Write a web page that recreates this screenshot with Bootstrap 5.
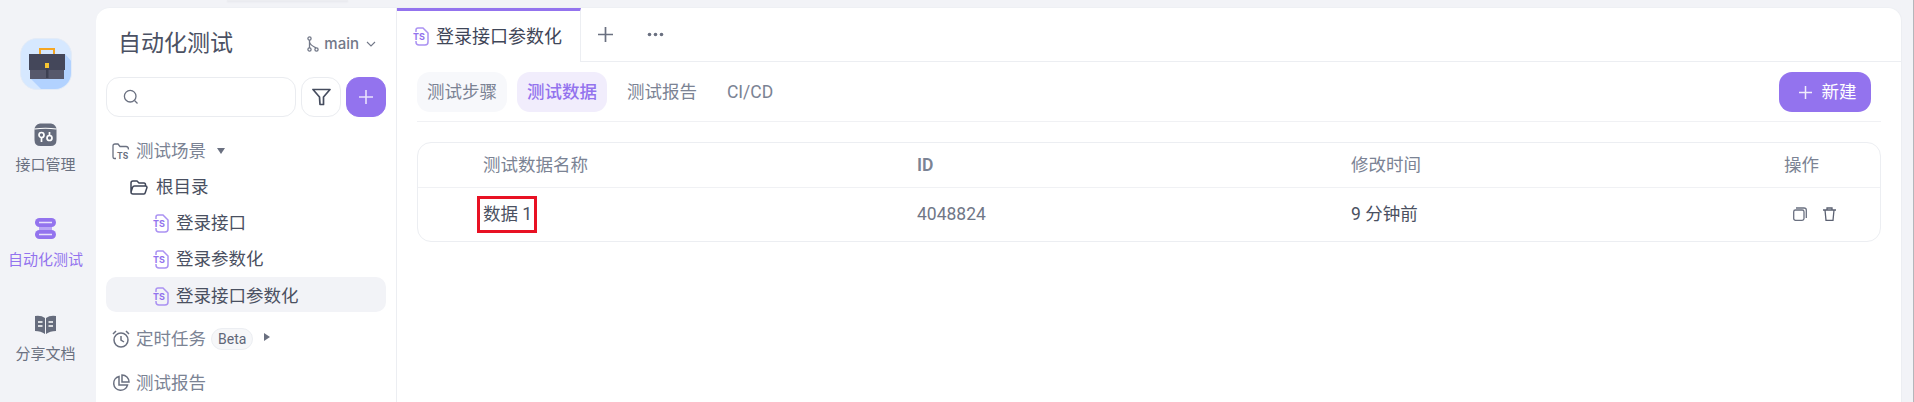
<!DOCTYPE html>
<html lang="zh">
<head>
    <title>自动化测试</title>
    <meta charset="UTF-8">
    <meta name="viewport" content="width=device-width, initial-scale=1.0">
    <link href="https://cdn.jsdelivr.net/npm/bootstrap@5.3.3/dist/css/bootstrap.min.css" rel="stylesheet">
    <style>
        html, body { height: 402px; overflow: hidden; }
        body { background: #f2f3f7; font-family: Roboto, "Noto Sans CJK SC", sans-serif; font-size: 17.5px; color: #5f6678; }
        .app-shell { height: 402px; padding-top: 7px; padding-right: 11px; border-right: 1px solid #b4b6bb; }
        .top-ghost { position: fixed; top: 0; left: 227px; width: 121px; height: 1px; background: #eceDf1; box-shadow: 0 1px 2px rgba(40,45,70,.08); }
        .side-rail { width: 96px; flex: none; margin-top: -7px; padding-right: 5px; }
        .rail-logo { width: 52px; height: 52px; flex: none; margin-top: 38px; margin-bottom: 33px; border-radius: 17px; background: #d6e8ff; border: 1px solid #e3ebf7; overflow: hidden; }
        .rail-item { height: 94.5px; flex: none; font-size: 15px; color: #6a7080; line-height: 20px; }
        .rail-ic { height: 24px; margin-bottom: 8px; }
        .rail-on { color: #9373ee; }
        .work-panel { background: #fff; border-radius: 14px 14px 0 0; min-width: 0; border-top: 1px solid #eef0f4; border-right: 1px solid #eceef2; }
        .tree-pane { width: 301px; flex: none; border-right: 1px solid #eceef2; padding: 0 10px; }
        .tree-head { height: 69px; padding: 3px 10px 0 12px; }
        .tree-title { font-size: 23px; color: #4b5163; }
        .branch-pick { font-family: Inter, sans-serif; font-size: 15px; font-weight: 500; color: #727888; gap: 7px; }
        .branch-ic { margin-right: -2px; }
        .tool-row { gap: 5px; }
        .tool-box { height: 40px; border: 1px solid #eaecf0; border-radius: 13px; background: #fff; }
        .tool-square { width: 40px; flex: none; }
        .tool-add { background: #9373ee; border-color: #9373ee; }
        .tree-rows { margin-top: 16px; }
        .tree-row { height: 36px; color: #7b8394; white-space: nowrap; }
        .tree-deep { color: #4a5061; }
        .tree-in1 { padding-left: 24px; }
        .tree-in2 { padding-left: 47px; }
        .tree-in0 { padding-left: 6px; }
        .tree-ic { margin-right: 6px; }
        .root-name { margin-left: 2px; }
        .file-ic { margin-right: 7px; }
        .tree-sel { background: #f2f3f7; border-radius: 10px; height: 35px; padding-top: 3px; }
        .tree-gap { margin-top: 9px; }
        .beta-tag { font-size: 14px; color: #5f6678; background: #f6f7f9; border: 1px solid #eceef2; border-radius: 11px; padding: 0 6px; margin-left: 5px; line-height: 20px; }
        .caret-down { width: 0; height: 0; margin-left: 11px; border-left: 4px solid transparent; border-right: 4px solid transparent; border-top: 6px solid #6a7080; }
        .caret-right { width: 0; height: 0; margin-left: 11px; margin-top: -5px; border-top: 4px solid transparent; border-bottom: 4px solid transparent; border-left: 6px solid #6a7080; }
        .page-tabs { height: 54px; }
        .page-tab { width: 184px; flex: none; border-top: 3px solid #9373ee; border-right: 1px solid #eceef2; padding-left: 16px; color: #3f4658; font-size: 18px; }
        .page-tab-rest { border-bottom: 1px solid #eceef2; padding-left: 17px; }
        .sub-bar { margin: 10px 20px 0 20px; height: 50px; border-bottom: 1px solid #f0f1f4; }
        .sub-tab { height: 40px; width: 90px; border-radius: 13px; color: #7b8394; font-size: 17.5px; }
        .sub-on1 { background: #f7f8fb; }
        .sub-on2 { background: #f1edfc; color: #9373ee; font-weight: 500; margin-left: 10px; }
        .sub-plain { margin-left: 10px; }
        .sub-ci { width: 86px; }
        .btn-new { height: 40px; width: 92px; margin-right: 10px; border-radius: 13px; background: #9373ee; color: #fff; font-size: 17.5px; gap: 10px; padding: 0 0 0 5px; }
        .btn-new:hover { background: #9373ee; color: #fff; }
        .data-box { margin: 20px 20px 0; border: 1px solid #eceef2; border-radius: 14px; overflow: hidden; }
        .data-table { table-layout: fixed; margin: 0; }
        .data-table th, .data-table td { padding: 0; vertical-align: middle; border-bottom: 0; font-size: 17.5px; }
        .data-table th { height: 44px; font-weight: 400; color: #7b8394; border-bottom: 1px solid #f0f1f4; }
        .data-table td { height: 54px; color: #707787; }
        .data-name { padding-left: 65px !important; }
        .data-first { display: inline-block; outline: 3px solid #e81123; color: #4a5061; padding: 2px 2px 2px 3px; margin-left: -3px; line-height: 27px; }
        .data-when { color: #4a5061 !important; }
        .id-head { font-weight: 600 !important; }
        .ops-cell { padding-left: 9px; gap: 16px; }
    </style>
</head>
<body>
    <div class="top-ghost"></div>
    <div class="app-shell d-flex">
        <!-- left rail -->
        <div class="side-rail d-flex flex-column align-items-center">
            <div class="rail-logo">
                <svg width="52" height="52" viewBox="0 0 52 52">
                    <path d="M44 15 L52 24 V52 H22 L9 39 Z" fill="#b2d2ff"/>
                    <path d="M19 15 V10 H33 V15" fill="none" stroke="#f5a623" stroke-width="2"/>
                    <rect x="8" y="15" width="36" height="16" fill="#44475a"/>
                    <rect x="9" y="31" width="34" height="9" fill="#56586c"/>
                    <rect x="25" y="28" width="2.5" height="11" fill="#3d4052"/>
                    <rect x="24" y="24" width="4" height="5" fill="#f7c531"/>
                </svg>
            </div>
            <div class="rail-item d-flex flex-column align-items-center">
                <div class="rail-ic">
                    <svg class="d-block" width="23" height="23" viewBox="0 0 23 23">
                        <path d="M6 0.5 H17 Q22.5 1.5 22.5 7 V17 Q22.5 23 16.5 23 H6.5 Q0.5 23 0.5 17 V7 Q0.5 1.5 6 0.5 Z" fill="#666c7d"/>
                        <path d="M0.5 6 Q11.5 4.5 22.5 6" fill="none" stroke="#fff" stroke-width="1.1"/>
                        <circle cx="7.5" cy="12" r="2.5" fill="none" stroke="#fff" stroke-width="1.7"/>
                        <path d="M7.5 14.5 V19 M15.5 9 V13" stroke="#fff" stroke-width="1.7"/>
                        <circle cx="15.5" cy="15" r="2.5" fill="none" stroke="#fff" stroke-width="1.7"/>
                    </svg>
                </div>
                <span>接口管理</span>
            </div>
            <div class="rail-item rail-on d-flex flex-column align-items-center">
                <div class="rail-ic">
                    <svg class="d-block" width="21" height="21" viewBox="0 0 21 21">
                        <rect x="4" y="7" width="13" height="7" fill="#b9a6f5"/>
                        <rect x="0" y="0" width="21" height="9" rx="4.5" fill="#9373ee"/>
                        <rect x="0" y="12" width="21" height="9" rx="4.5" fill="#9373ee"/>
                        <path d="M4 4.5 H17 M4 16.5 H17" stroke="#e8e1fb" stroke-width="1.4"/>
                    </svg>
                </div>
                <span>自动化测试</span>
            </div>
            <div class="rail-item d-flex flex-column align-items-center">
                <div class="rail-ic d-flex align-items-center">
                    <svg class="d-block" width="21" height="19" viewBox="0 0 21 19">
                        <path d="M0 1 Q6 0 10 3 V19 Q6 16 0 16 Z M21 1 Q15 0 11 3 V19 Q15 16 21 16 Z" fill="#666c7d"/>
                        <path d="M3 7 H7.5 M3 11 H7.5 M13.5 7 H18 M13.5 11 H18" stroke="#fff" stroke-width="1.4"/>
                    </svg>
                </div>
                <span>分享文档</span>
            </div>
        </div>

        <div class="work-panel flex-grow-1 d-flex">
            <!-- tree -->
            <div class="tree-pane">
                <div class="tree-head d-flex align-items-center justify-content-between">
                    <span class="tree-title">自动化测试</span>
                    <span class="branch-pick d-flex align-items-center">
                        <svg class="branch-ic" width="12" height="16" viewBox="0 0 12 16" fill="none" stroke="#727888" stroke-width="1.3">
                            <circle cx="2.5" cy="2.5" r="1.6"/><circle cx="2.5" cy="13.5" r="1.6"/><circle cx="9.5" cy="13.5" r="1.6"/>
                            <path d="M2.5 4 V12 M2.5 6 Q3 9 9 11.8"/>
                        </svg>
                        main
                        <svg width="10" height="6" viewBox="0 0 10 6" fill="none" stroke="#727888" stroke-width="1.1"><path d="M1 1 L5 5 L9 1"/></svg>
                    </span>
                </div>
                <div class="tool-row d-flex">
                    <div class="tool-box flex-grow-1 d-flex align-items-center ps-3">
                        <svg width="16" height="16" viewBox="0 0 16 16" fill="none" stroke="#6a7080" stroke-width="1.3"><circle cx="7.2" cy="7.2" r="5.8"/><path d="M11.5 11.5 L14.5 14.5"/></svg>
                    </div>
                    <div class="tool-box tool-square d-flex align-items-center justify-content-center">
                        <svg width="19" height="18" viewBox="0 0 19 18" fill="none" stroke="#454c5e" stroke-width="1.7" stroke-linejoin="round"><path d="M1 1.5 H18 L11.5 9 V16.5 H8 L7.5 9 Z"/></svg>
                    </div>
                    <div class="tool-box tool-square tool-add d-flex align-items-center justify-content-center">
                        <svg width="14" height="14" viewBox="0 0 14 14" stroke="#e9e2fc" stroke-width="1.6"><path d="M7 0 V14 M0 7 H14"/></svg>
                    </div>
                </div>
                <div class="tree-rows">
                    <div class="tree-row tree-in0 d-flex align-items-center">
                        <svg class="tree-ic" width="18" height="17" viewBox="0 0 18 17" fill="none" stroke="#6a7080" stroke-width="1.3"><path d="M4 15.5 H2.5 Q1 15.5 1 13.5 V3 Q1 1 3 1 H6 L8 3.5 H14 Q16.5 3.5 16.5 6.5"/><text x="5" y="16" font-size="8.5" font-weight="700" fill="#6a7080" stroke="none" font-family="Inter, sans-serif">TS</text></svg>
                        <span>测试场景</span>
                        <span class="caret-down"></span>
                    </div>
                    <div class="tree-row tree-in1 tree-deep d-flex align-items-center">
                        <svg class="tree-ic" width="18" height="15" viewBox="0 0 18 15" fill="none" stroke="#3f4658" stroke-width="1.5"><path d="M1 12 V3 Q1 1 3 1 H7 L9 3 H14 Q15.5 3 15.5 5 V6 M1 12 Q1 14 3 14 H14 Q15 14 15.5 12 L17 7.5 Q17 6 15.5 6 H4.5 Q3 6 2.5 7.5 Z"/></svg>
                        <span class="root-name">根目录</span>
                    </div>
                    <div class="tree-row tree-in2 tree-deep d-flex align-items-center">
                        <svg class="file-ic" width="16" height="19" viewBox="0 0 16 19" fill="none" stroke="#ab92f2" stroke-width="1.5"><path d="M3 5 V3 Q3 1 5 1 H10 L15 6 V15 Q15 18 12 18 H6 Q3 18 3 15 V14"/><text x="0" y="12.5" font-size="9" font-weight="700" fill="#9373ee" stroke="none" font-family="Inter, sans-serif">TS</text></svg>
                        <span>登录接口</span>
                    </div>
                    <div class="tree-row tree-in2 tree-deep d-flex align-items-center">
                        <svg class="file-ic" width="16" height="19" viewBox="0 0 16 19" fill="none" stroke="#ab92f2" stroke-width="1.5"><path d="M3 5 V3 Q3 1 5 1 H10 L15 6 V15 Q15 18 12 18 H6 Q3 18 3 15 V14"/><text x="0" y="12.5" font-size="9" font-weight="700" fill="#9373ee" stroke="none" font-family="Inter, sans-serif">TS</text></svg>
                        <span>登录参数化</span>
                    </div>
                    <div class="tree-row tree-sel tree-in2 tree-deep d-flex align-items-center">
                        <svg class="file-ic" width="16" height="19" viewBox="0 0 16 19" fill="none" stroke="#ab92f2" stroke-width="1.5"><path d="M3 5 V3 Q3 1 5 1 H10 L15 6 V15 Q15 18 12 18 H6 Q3 18 3 15 V14"/><text x="0" y="12.5" font-size="9" font-weight="700" fill="#9373ee" stroke="none" font-family="Inter, sans-serif">TS</text></svg>
                        <span>登录接口参数化</span>
                    </div>
                    <div class="tree-row tree-gap tree-in0 d-flex align-items-center">
                        <svg class="tree-ic" width="18" height="18" viewBox="0 0 18 18" fill="none" stroke="#6a7080" stroke-width="1.5"><circle cx="9" cy="10" r="7"/><path d="M9 6 V10 L12 12 M1 4 L4 1 M17 4 L14 1"/></svg>
                        <span>定时任务</span>
                        <span class="beta-tag">Beta</span>
                        <span class="caret-right"></span>
                    </div>
                    <div class="tree-row tree-in0 d-flex align-items-center mt-2">
                        <svg class="tree-ic" width="18" height="18" viewBox="0 0 18 18" fill="none" stroke="#6a7080" stroke-width="1.5"><path d="M7 2.5 A7 7 0 1 0 15.5 11 H7 Z"/><path d="M10 1 A7 7 0 0 1 17 8 H10 Z"/></svg>
                        <span>测试报告</span>
                    </div>
                </div>
            </div>

            <!-- main area -->
            <div class="flex-grow-1" style="min-width:0">
                <div class="page-tabs d-flex">
                    <div class="page-tab d-flex align-items-center">
                        <svg class="file-ic" width="16" height="19" viewBox="0 0 16 19" fill="none" stroke="#ab92f2" stroke-width="1.5"><path d="M3 5 V3 Q3 1 5 1 H10 L15 6 V15 Q15 18 12 18 H6 Q3 18 3 15 V14"/><text x="0" y="12.5" font-size="9" font-weight="700" fill="#9373ee" stroke="none" font-family="Inter, sans-serif">TS</text></svg>
                        <span>登录接口参数化</span>
                    </div>
                    <div class="page-tab-rest flex-grow-1 d-flex align-items-center">
                        <svg width="15" height="15" viewBox="0 0 15 15" stroke="#6a7080" stroke-width="1.7"><path d="M7.5 0 V15 M0 7.5 H15"/></svg>
                        <svg style="margin-left:34px" width="17" height="5" viewBox="0 0 17 5" fill="#6a7080"><circle cx="2.5" cy="2.5" r="1.8"/><circle cx="8.5" cy="2.5" r="1.8"/><circle cx="14.5" cy="2.5" r="1.8"/></svg>
                    </div>
                </div>
                <div class="sub-bar d-flex align-items-start">
                    <div class="sub-tab sub-on1 d-flex align-items-center justify-content-center">测试步骤</div>
                    <div class="sub-tab sub-on2 d-flex align-items-center justify-content-center">测试数据</div>
                    <div class="sub-tab sub-plain d-flex align-items-center justify-content-center">测试报告</div>
                    <div class="sub-tab sub-ci d-flex align-items-center justify-content-center">CI/CD</div>
                    <button class="btn btn-new ms-auto d-flex align-items-center justify-content-center border-0">
                        <svg width="13" height="13" viewBox="0 0 13 13" stroke="#f1edfc" stroke-width="1.5"><path d="M6.5 0 V13 M0 6.5 H13"/></svg>
                        新建
                    </button>
                </div>
                <div class="data-box">
                    <table class="table data-table">
                        <thead>
                            <tr>
                                <th class="data-name" style="width:499px">测试数据名称</th>
                                <th class="id-head" style="width:434px">ID</th>
                                <th style="width:433px">修改时间</th>
                                <th>操作</th>
                            </tr>
                        </thead>
                        <tbody>
                            <tr>
                                <td class="data-name"><span class="data-first">数据 1</span></td>
                                <td>4048824</td>
                                <td class="data-when">9 分钟前</td>
                                <td>
                                    <span class="ops-cell d-flex align-items-center">
                                        <svg width="14" height="14" viewBox="0 0 14 14" fill="none" stroke="#6a7080" stroke-width="1.3"><rect x="0.7" y="3" width="10.3" height="10.3" rx="1.8"/><path d="M3 1 H11 Q13.3 1 13.3 3 V11"/></svg>
                                        <svg width="13" height="14" viewBox="0 0 13 14" fill="none" stroke="#5b6172" stroke-width="1.3"><path d="M0 3 H13 M4 3 V1 H9 V3 M2 3 L3 13.3 H10 L11 3"/></svg>
                                    </span>
                                </td>
                            </tr>
                        </tbody>
                    </table>
                </div>
            </div>
        </div>
    </div>
    <script src="https://cdn.jsdelivr.net/npm/bootstrap@5.3.3/dist/js/bootstrap.bundle.min.js"></script>
</body>
</html>
